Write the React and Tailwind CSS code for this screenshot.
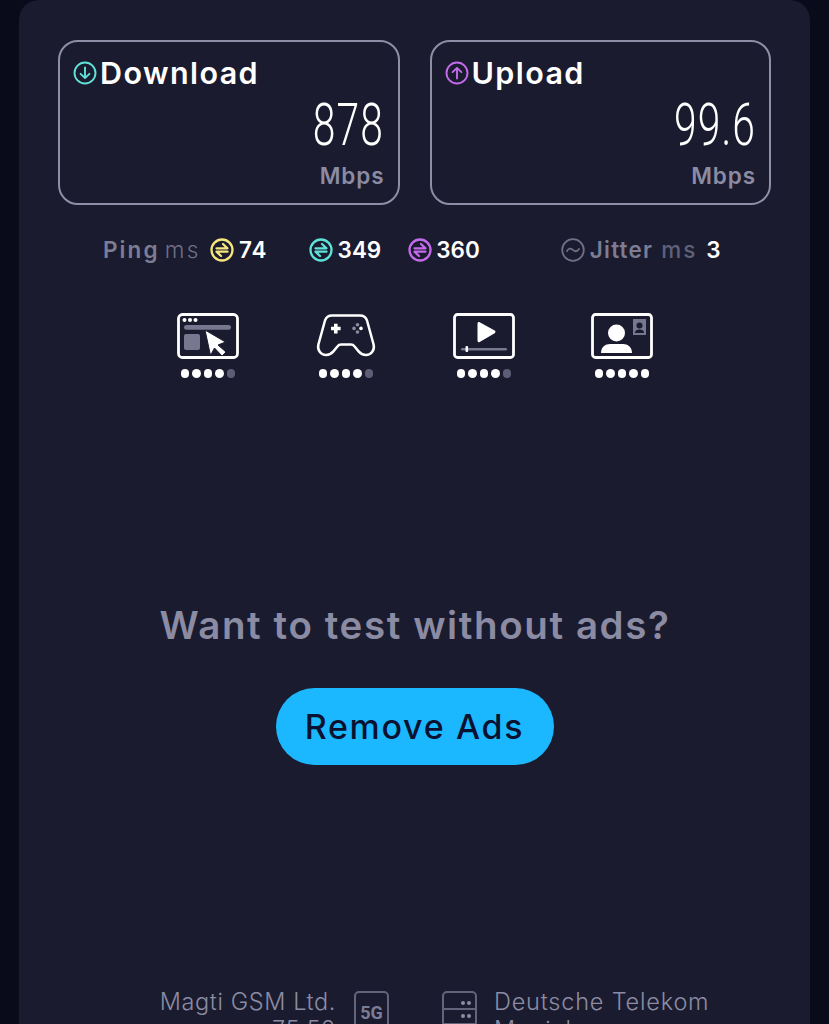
import { useState } from 'react';

const sans = "font-['Inter','Noto_Sans',sans-serif]";

// Ping and transfer circle with the two opposed arrows
const PingIcon = ({ color }) => (
  <svg width="24" height="24" viewBox="0 0 24 24" fill="none" stroke={color} strokeWidth="2.300" strokeLinecap="round" strokeLinejoin="round">
    <circle cx="12" cy="12" r="10.500" />
    <path d="M6.500 10.300h11L13 6" />
    <path d="M17.500 13.700h-11L11 18" />
  </svg>
);

const ArrowIcon = ({ color, up }) => (
  <svg width="24" height="24" viewBox="0 0 24 24" fill="none" stroke={color} strokeWidth="1.900" strokeLinecap="round" strokeLinejoin="round" className="shrink-0">
    <circle cx="12" cy="12" r="10.500" />
    {up ? <path d="M12 17.500V7M7.600 11.200L12 6.800l4.400 4.400" /> : <path d="M12 6.500V17M7.600 12.800l4.400 4.400 4.400-4.400" />}
  </svg>
);

const JitterIcon = () => (
  <svg width="24" height="24" viewBox="0 0 24 24" fill="none" stroke="#6f7087" strokeWidth="1.800" strokeLinecap="round">
    <circle cx="12" cy="12" r="10.800" />
    <path d="M6 13c1.600-3 3.600-3 5.500-1.400S15.600 14.600 18 11" />
  </svg>
);

const BrowseIcon = () => (
  <svg width="62" height="46" viewBox="0 0 62 46" fill="none">
    <rect x="1.500" y="1.500" width="59" height="43" rx="4" stroke="#fff" strokeWidth="2.800" />
    <circle cx="7.500" cy="7" r="2" fill="#fff" />
    <circle cx="13" cy="7" r="2" fill="#fff" />
    <circle cx="18.500" cy="7" r="2" fill="#fff" />
    <rect x="7" y="12" width="47" height="4.800" rx="2.400" fill="#77778f" />
    <rect x="7" y="21" width="16" height="16" rx="2" fill="#77778f" />
    <path d="M28 17l20.500 12-7.500 3 8 7-4 4-7.500-8-4 7.500z" fill="#fff" stroke="#1a1b2e" strokeWidth="1" strokeLinejoin="round" />
  </svg>
);

const GameIcon = () => (
  <svg width="60" height="46" viewBox="0 0 60 46" fill="none">
    <path d="M16 2.500h28c3.400 0 5.800 1.600 7 5l6.600 24c1.400 6-2.800 10.500-7.600 10.500-3 0-5.400-1.200-7.400-3.600l-4-4.900c-1-1.300-2.200-1.900-3.800-1.900H25.200c-1.600 0-2.800.6-3.800 1.900l-4 4.900c-2 2.400-4.400 3.600-7.400 3.600-4.800 0-9-4.500-7.600-10.500L9 7.500c1.200-3.400 3.600-5 7-5z" stroke="#fff" strokeWidth="2.500" strokeLinejoin="round" />
    <path d="M15 15.500h9.600M19.800 10.800v9.600" stroke="#fff" strokeWidth="3.600" />
    <circle cx="41.500" cy="11.800" r="1.800" fill="#8a8aa0" />
    <circle cx="41.500" cy="19" r="1.800" fill="#8a8aa0" />
    <circle cx="38" cy="15.400" r="1.800" fill="#8a8aa0" />
    <circle cx="45" cy="15.400" r="1.800" fill="#fff" />
  </svg>
);

const VideoIcon = () => (
  <svg width="62" height="46" viewBox="0 0 62 46" fill="none">
    <rect x="1.500" y="1.500" width="59" height="43" rx="3" stroke="#fff" strokeWidth="2.800" />
    <path d="M24.500 10.500c0-1.200 1.200-1.900 2.200-1.300l15 8.400c1 .6 1 2 0 2.600l-15 8.800c-1 .6-2.200-.1-2.200-1.300z" fill="#fff" />
    <rect x="8" y="35" width="46" height="2.600" rx="1.300" fill="#77778f" />
    <rect x="12.500" y="33" width="2.600" height="6" rx="1" fill="#fff" />
  </svg>
);

const VoiceIcon = () => (
  <svg width="62" height="46" viewBox="0 0 62 46" fill="none">
    <rect x="1.500" y="1.500" width="59" height="43" rx="3" stroke="#fff" strokeWidth="2.800" />
    <circle cx="25.500" cy="20" r="8.500" fill="#fff" />
    <path d="M10 40c0-6 4.400-9 9-9h13c4.600 0 9 3 9 9z" fill="#fff" />
    <rect x="42" y="6" width="13" height="16" fill="#77778f" />
    <circle cx="48.500" cy="12.500" r="3" fill="#1a1b2e" />
    <path d="M44 20c0-2.600 2-3.500 4.500-3.500S53 17.400 53 20z" fill="#1a1b2e" />
  </svg>
);

const Dots = ({ filled }) => (
  <div className="flex gap-[3px] mt-[10px]">
    {[0, 1, 2, 3, 4].map((i) => (
      <span key={i} className={`w-[8.500px] h-[8.500px] rounded-full ${i < filled ? 'bg-white' : 'bg-[#5d5e75]'}`} />
    ))}
  </div>
);

const SpeedBox = ({ title, value, icon }) => (
  <div className="h-[165px] border-2 border-[#8e8ea6] rounded-[20px] px-[13px] pt-[14px] flex flex-col">
    <div className="flex items-center gap-[3px] h-[33px]">
      {icon}
      <span className="text-[30.500px] font-semibold text-white tracking-[1.400px]">{title}</span>
    </div>
    <div className="text-right text-white font-['Roboto',sans-serif] font-light text-[60px] leading-[50px] mt-[11px] origin-right scale-x-[0.68] tracking-[1.500px] pr-[1px]">{value}</div>
    <div className="text-right text-[#8b8ba3] font-semibold text-[22.500px] tracking-[0.900px] leading-[26px] mt-[13px]">Mbps</div>
  </div>
);

const App = () => {
  const [apps] = useState([
    { icon: <BrowseIcon />, filled: 4 },
    { icon: <GameIcon />, filled: 4 },
    { icon: <VideoIcon />, filled: 4 },
    { icon: <VoiceIcon />, filled: 5 },
  ]);

  return (
    <div className={`h-[1024px] overflow-hidden bg-[#090a1a] px-[19px] ${sans}`}>
      <div className="h-[1100px] w-[791px] bg-[#1a1b2e] rounded-t-[20px] pt-[40px] px-[39px]">
        <div className="grid grid-cols-2 gap-[30px] w-[713px]">
          <SpeedBox title="Download" value="878" icon={<ArrowIcon color="#5fe3d8" />} />
          <SpeedBox title="Upload" value="99.6" icon={<ArrowIcon color="#c36bea" up />} />
        </div>

        <div className="flex items-center h-[28px] mt-[31px] pl-[45px] text-[22.500px] font-semibold text-white whitespace-nowrap">
          <span className="text-[#7c7d94] tracking-[2.100px]">Ping</span>
          <span className="ml-[5px] font-light text-[#6f7087] tracking-[2.500px]">ms</span>
          <span className="ml-[9px]"><PingIcon color="#f5e67e" /></span>
          <span className="ml-[5px] tracking-[1px]">74</span>
          <span className="ml-[41px]"><PingIcon color="#5fe3d8" /></span>
          <span className="ml-[5px]">349</span>
          <span className="ml-[27px]"><PingIcon color="#c36bea" /></span>
          <span className="ml-[4px]">360</span>
          <span className="ml-[81px]"><JitterIcon /></span>
          <span className="ml-[5px] text-[#7c7d94] tracking-[1.200px]">Jitter</span>
          <span className="ml-[8px] font-medium text-[#5f6078] tracking-[2px]">ms</span>
          <span className="ml-[9px]">3</span>
        </div>

        <div className="grid grid-cols-[138px_138px_138px_138px] mt-[49px] ml-[81px]">
          {apps.map((app, i) => (
            <div key={i} className="flex flex-col items-center">
              {app.icon}
              <Dots filled={app.filled} />
            </div>
          ))}
        </div>

        <div className="mt-[224px] text-center text-[38.500px] leading-[46px] font-semibold text-[#8b8ba3] ml-[1px] tracking-[1.600px]">Want to test without ads?</div>

        <div className="flex justify-center mt-[40px]">
          <button className="w-[278px] h-[77px] rounded-full bg-[#1cb8ff] text-[#0b1130] text-[34px] font-medium tracking-[1.700px]">Remove Ads</button>
        </div>

        <div className="flex mt-[223px] text-[23.500px] leading-[28px] font-light text-[#8b8ba3]">
          <div className="w-[278px] text-right tracking-[0.600px]">
            <div className="whitespace-nowrap">Magti GSM Ltd.</div>
            <div>75.52</div>
          </div>
          <div className="ml-[18px] w-[35px] h-[56px] border-2 border-[#63647b] rounded-[5px] mt-[3px] flex items-start justify-center pt-[10px] text-[18px] leading-[20px] font-bold text-[#7c7d94] font-['Roboto',sans-serif]">5G</div>
          <div className="ml-[53px] mt-[3px] w-[35px] h-[56px] border-2 border-[#63647b] rounded-[5px] flex flex-col">
            <div className="h-[17px] border-b-2 border-[#63647b] flex justify-end items-center gap-[2px] pr-[4px] pt-[5px]">
              <span className="w-[4px] h-[4px] rounded-full bg-[#8b8ba3]" />
              <span className="w-[4px] h-[4px] rounded-full bg-[#8b8ba3]" />
            </div>
            <div className="h-[15px] border-b-2 border-[#63647b] flex justify-end items-center gap-[2px] pr-[4px]">
              <span className="w-[4px] h-[4px] rounded-full bg-[#8b8ba3]" />
              <span className="w-[4px] h-[4px] rounded-full bg-[#8b8ba3]" />
            </div>
          </div>
          <div className="ml-[17px] whitespace-nowrap tracking-[0.800px]">
            <div>Deutsche Telekom</div>
            <div>Munich</div>
          </div>
        </div>
      </div>
    </div>
  );
};

export default App;
